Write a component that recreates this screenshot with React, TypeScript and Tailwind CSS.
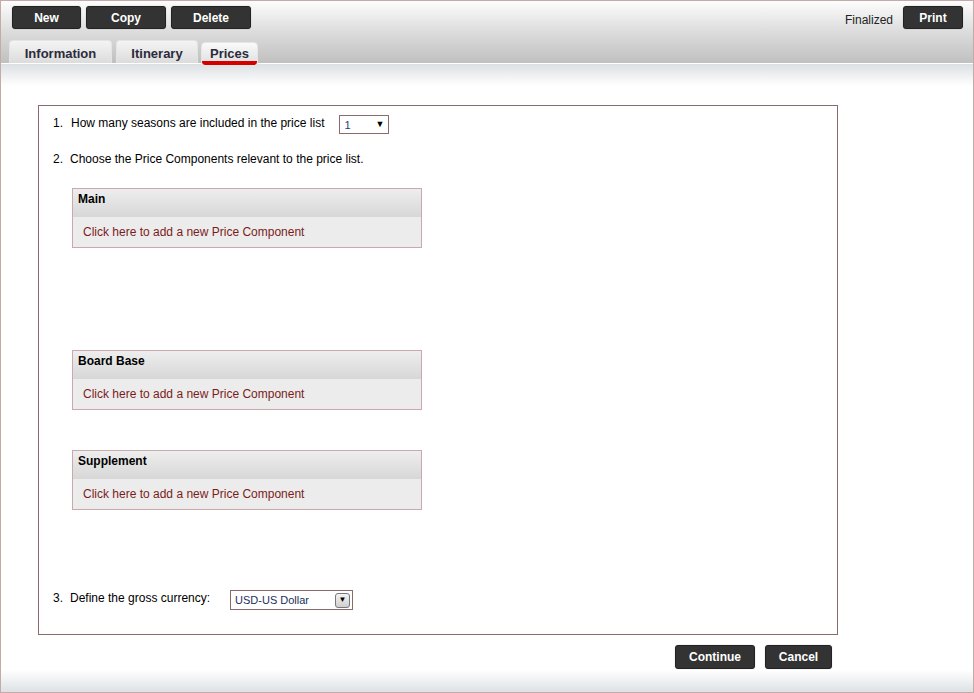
import React from "react";

const btn =
  "h-[23px] rounded-[3px] bg-[#333333] text-white font-bold text-[12px] flex items-center justify-center border border-[#222] shadow-[0_0_1px_rgba(0,0,0,0.4)]";

function Card({ title }: { title: string }) {
  return (
    <div className="w-[350px] border border-[#c9a9ab]">
      <div className="h-[28px] bg-gradient-to-b from-[#eeeeee] to-[#d7d7d7] pl-[5px] pt-[3px] font-bold text-[12px] leading-[14px] text-black">
        {title}
      </div>
      <div className="h-[30px] bg-[#ececec] pl-[10px] flex items-center text-[12px] text-[#7b1c1c]">
        Click here to add a new Price Component
      </div>
    </div>
  );
}

export default function App() {
  return (
    <div
      className="w-[974px] h-[693px] border border-[#c5aaaa] bg-white flex flex-col overflow-hidden"
      style={{ fontFamily: '"Liberation Sans", Arial, sans-serif' }}
    >
      {/* header */}
      <div className="h-[62px] shrink-0 bg-gradient-to-b from-[#fdfdfd] via-[#dcdcdc] to-[#c0c0c0] flex flex-col">
        <div className="flex items-center pt-[5px] pl-[11px] pr-[10px]">
          <div className={`${btn} w-[69px]`}>New</div>
          <div className={`${btn} w-[80px] ml-[5px]`}>Copy</div>
          <div className={`${btn} w-[80px] ml-[5px]`}>Delete</div>
          <div className="flex-1" />
          <div className="text-[12px] text-[#222] mr-[10px] mt-[4px]">Finalized</div>
          <div className={`${btn} w-[60px]`}>Print</div>
        </div>
        <div className="flex items-end pl-[8px] mt-[10px] h-[24px]">
          <div className="w-[103px] h-[23px] rounded-t-[4px] border border-b-0 border-[#e4e4e4] bg-gradient-to-b from-[#f4f4f4] to-[#dcdcdc] text-[13px] leading-[15px] font-bold text-[#2b2b3b] flex justify-center pt-[5px]">
            Information
          </div>
          <div className="w-[82px] h-[23px] ml-[4px] rounded-t-[4px] border border-b-0 border-[#e4e4e4] bg-gradient-to-b from-[#f4f4f4] to-[#dcdcdc] text-[13px] leading-[15px] font-bold text-[#2b2b3b] flex justify-center pt-[5px]">
            Itinerary
          </div>
          <div className="relative w-[57px] h-[24px] ml-[3px] -mb-[3px] rounded-[4px] border border-[#e6e6e6] bg-gradient-to-b from-[#fafafa] to-[#dedede] text-[13px] leading-[15px] font-bold text-[#2b2b3b] flex justify-center pt-[3px] overflow-hidden">
            Prices
            <div className="absolute left-0 right-0 bottom-0 h-[4px] bg-[#d40000] rounded-b-[3px]" />
          </div>
        </div>
      </div>
      <div className="h-[1px] bg-white shrink-0" />
      <div className="h-[22px] shrink-0 bg-gradient-to-b from-[#dce0e3] to-white" />

      {/* content */}
      <div className="flex-1 flex flex-col pl-[37px]">
        <div className="mt-[19px] w-[800px] h-[530px] border border-[#8a6b6b] text-[12px] text-black flex flex-col pl-[14px]">
          <div className="flex items-start mt-[8px]">
            <span className="w-[18px]">1.</span>
            <span>How many seasons are included in the price list</span>
            <div className="ml-[15px] mt-[1px] w-[50px] h-[19px] border border-[#8a6b6b] flex items-center pl-[4px] pr-[4px] justify-between">
              <span className="text-[11px] text-[#1a3f7a] mt-[1px]">1</span>
              <span className="text-[9px]">▼</span>
            </div>
          </div>
          <div className="flex mt-[16px]">
            <span className="w-[17px]">2.</span>
            <span>Choose the Price Components relevant to the price list.</span>
          </div>
          <div className="ml-[19px] mt-[20px]">
            <Card title="Main" />
          </div>
          <div className="ml-[19px] mt-[102px]">
            <Card title="Board Base" />
          </div>
          <div className="ml-[19px] mt-[40px]">
            <Card title="Supplement" />
          </div>
          <div className="flex items-start mt-[79px]">
            <span className="w-[17px]">3.</span>
            <span>Define the gross currency:</span>
            <div className="ml-[20px] mt-[1px] w-[123px] h-[20px] border border-[#8a6b6b] flex items-center pl-[4px] pr-[2px] justify-between">
              <span className="text-[11px] text-[#1a2f5a]">USD-US Dollar</span>
              <span className="w-[15px] h-[15px] rounded-[3px] border border-[#777] bg-gradient-to-b from-[#f4f4f4] to-[#cfcfcf] flex items-center justify-center text-[8px] leading-none">
                ▼
              </span>
            </div>
          </div>
        </div>
        <div className="w-[800px] flex justify-end pr-[6px] mt-[10px]">
          <div className={`${btn} w-[80px] h-[24px]`}>Continue</div>
          <div className={`${btn} w-[67px] h-[24px] ml-[10px]`}>Cancel</div>
        </div>
      </div>
      <div className="h-[22px] shrink-0 bg-gradient-to-b from-white to-[#dde1e4]" />
    </div>
  );
}
